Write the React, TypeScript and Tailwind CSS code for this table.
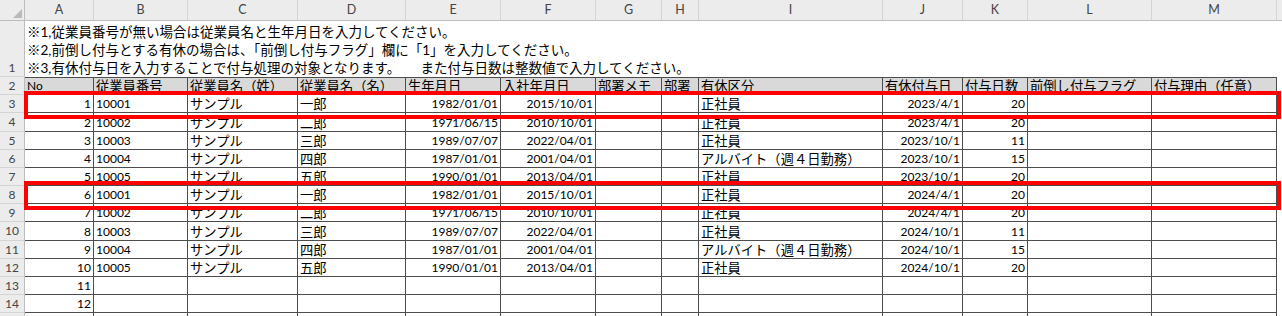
import React from "react";

const COLS =
  "grid grid-cols-[25px_69px_94px_110px_108px_95px_95px_66px_37px_184px_80px_65px_124px_125px_1fr]";

const JP = "font-['Noto_Sans_CJK_JP',sans-serif] text-[13.3px]";
const NUM = "font-['Lato','Noto_Sans_CJK_JP',sans-serif] text-[12px]";

const letters = ["A", "B", "C", "D", "E", "F", "G", "H", "I", "J", "K", "L", "M"];

const headers = [
  "No",
  "従業員番号",
  "従業員名（姓）",
  "従業員名（名）",
  "生年月日",
  "入社年月日",
  "部署メモ",
  "部署",
  "有休区分",
  "有休付与日",
  "付与日数",
  "前倒し付与フラグ",
  "付与理由（任意）",
];

const base = [
  ["10001", "サンプル", "一郎", "1982/01/01", "2015/10/01", "正社員", "20"],
  ["10002", "サンプル", "二郎", "1971/06/15", "2010/10/01", "正社員", "20"],
  ["10003", "サンプル", "三郎", "1989/07/07", "2022/04/01", "正社員", "11"],
  ["10004", "サンプル", "四郎", "1987/01/01", "2001/04/01", "アルバイト（週４日勤務）", "15"],
  ["10005", "サンプル", "五郎", "1990/01/01", "2013/04/01", "正社員", "20"],
];
const grantDates = [
  "2023/4/1",
  "2023/4/1",
  "2023/10/1",
  "2023/10/1",
  "2023/10/1",
  "2024/4/1",
  "2024/4/1",
  "2024/10/1",
  "2024/10/1",
  "2024/10/1",
];

const rows: string[][] = [];
for (let i = 0; i < 12; i++) {
  if (i < 10) {
    const b = base[i % 5];
    rows.push([String(i + 1), b[0], b[1], b[2], b[3], b[4], "", "", b[5], grantDates[i], b[6], "", ""]);
  } else {
    rows.push([String(i + 1), "", "", "", "", "", "", "", "", "", "", "", ""]);
  }
}

const heights = [
  "h-[18px]",
  "h-[19px]",
  "h-[18px]",
  "h-[18px]",
  "h-[18px]",
  "h-[18px]",
  "h-[18px]",
  "h-[19px]",
  "h-[18px]",
  "h-[18px]",
  "h-[18px]",
  "h-[18px]",
];

const rightCols = new Set([0, 4, 5, 9, 10]);
const numCols = new Set([0, 1, 4, 5, 9, 10]);

function RowHead({ label, end }: { label: string; end?: boolean }) {
  return (
    <div
      className={`flex justify-center bg-[#ececec] border-r border-b border-r-[#bdbdbd] border-b-[#d4d4d4] font-['Lato',sans-serif] text-[12px] text-[#444] ${
        end ? "items-end pb-[1px]" : "items-center"
      }`}
    >
      <span className="leading-[14px]">{label}</span>
    </div>
  );
}

export default function App() {
  return (
    <div className="relative h-[316px] w-[1282px] overflow-hidden bg-white text-black">
      {/* column letters */}
      <div className={`${COLS} h-[21px]`}>
        <div className="relative bg-[#ececec] border-r border-b border-r-[#bdbdbd] border-b-[#bdbdbd]">
          <svg className="absolute right-[2px] bottom-[2px]" width="9" height="9" viewBox="0 0 9 9">
            <polygon points="9,0 9,9 0,9" fill="#b9b9b9" />
          </svg>
        </div>
        {letters.map((l) => (
          <div
            key={l}
            className="flex items-center justify-center bg-[#ececec] border-r border-b border-r-[#d4d4d4] border-b-[#bdbdbd] font-['Lato',sans-serif] text-[12.5px] text-[#444]"
          >
            {l}
          </div>
        ))}
        <div className="bg-[#ececec] border-b border-b-[#bdbdbd]" />
      </div>

      {/* row 1 notes */}
      <div className={`${COLS} h-[56px]`}>
        <RowHead label="1" end />
        <div
          className={`col-span-14 flex flex-col justify-end pl-[2px] font-['Lato','Noto_Sans_CJK_JP',sans-serif] text-[13.5px] leading-[18px] whitespace-nowrap`}
        >
          <div>※1,従業員番号が無い場合は従業員名と生年月日を入力してください。</div>
          <div>※2,前倒し付与とする有休の場合は、「前倒し付与フラグ」欄に「1」を入力してください。</div>
          <div>※3,有休付与日を入力することで付与処理の対象となります。　　また付与日数は整数値で入力してください。</div>
        </div>
      </div>

      {/* row 2 header */}
      <div className={`${COLS} h-[18px]`}>
        <RowHead label="2" />
        {headers.map((h, i) => (
          <div
            key={i}
            className={`flex items-center overflow-hidden whitespace-nowrap bg-[#d9d9d9] border-t border-r border-b border-[#4d4d4d] pl-[2px] ${
              i === 0 ? NUM : JP
            } leading-[16px]`}
          >
            {h}
          </div>
        ))}
        <div />
      </div>

      {/* data rows */}
      {rows.map((r, ri) => (
        <div key={ri} className={`${COLS} ${heights[ri]}`}>
          <RowHead label={String(ri + 3)} />
          {r.map((v, ci) => (
            <div
              key={ci}
              className={`flex items-center overflow-hidden whitespace-nowrap border-r border-b border-[#4d4d4d] leading-[16px] pt-[1px] ${
                rightCols.has(ci) ? "justify-end pr-[2px]" : "justify-start pl-[2px]"
              } ${numCols.has(ci) ? NUM : JP}`}
            >
              {v}
            </div>
          ))}
          <div />
        </div>
      ))}

      {/* row 15 partial (only its top edge is visible) */}
      <div className={`${COLS} h-[18px]`}>
        <RowHead label="" />
        {letters.map((l) => (
          <div key={l} className="border-r border-b border-[#4d4d4d]" />
        ))}
        <div />
      </div>

      {/* highlight boxes */}
      <div className="pointer-events-none absolute left-[24px] top-[91px] h-[28px] w-[1257px] border-4 border-[#ff0000]" />
      <div className="pointer-events-none absolute left-[24px] top-[181px] h-[29px] w-[1257px] border-4 border-[#ff0000]" />
    </div>
  );
}
